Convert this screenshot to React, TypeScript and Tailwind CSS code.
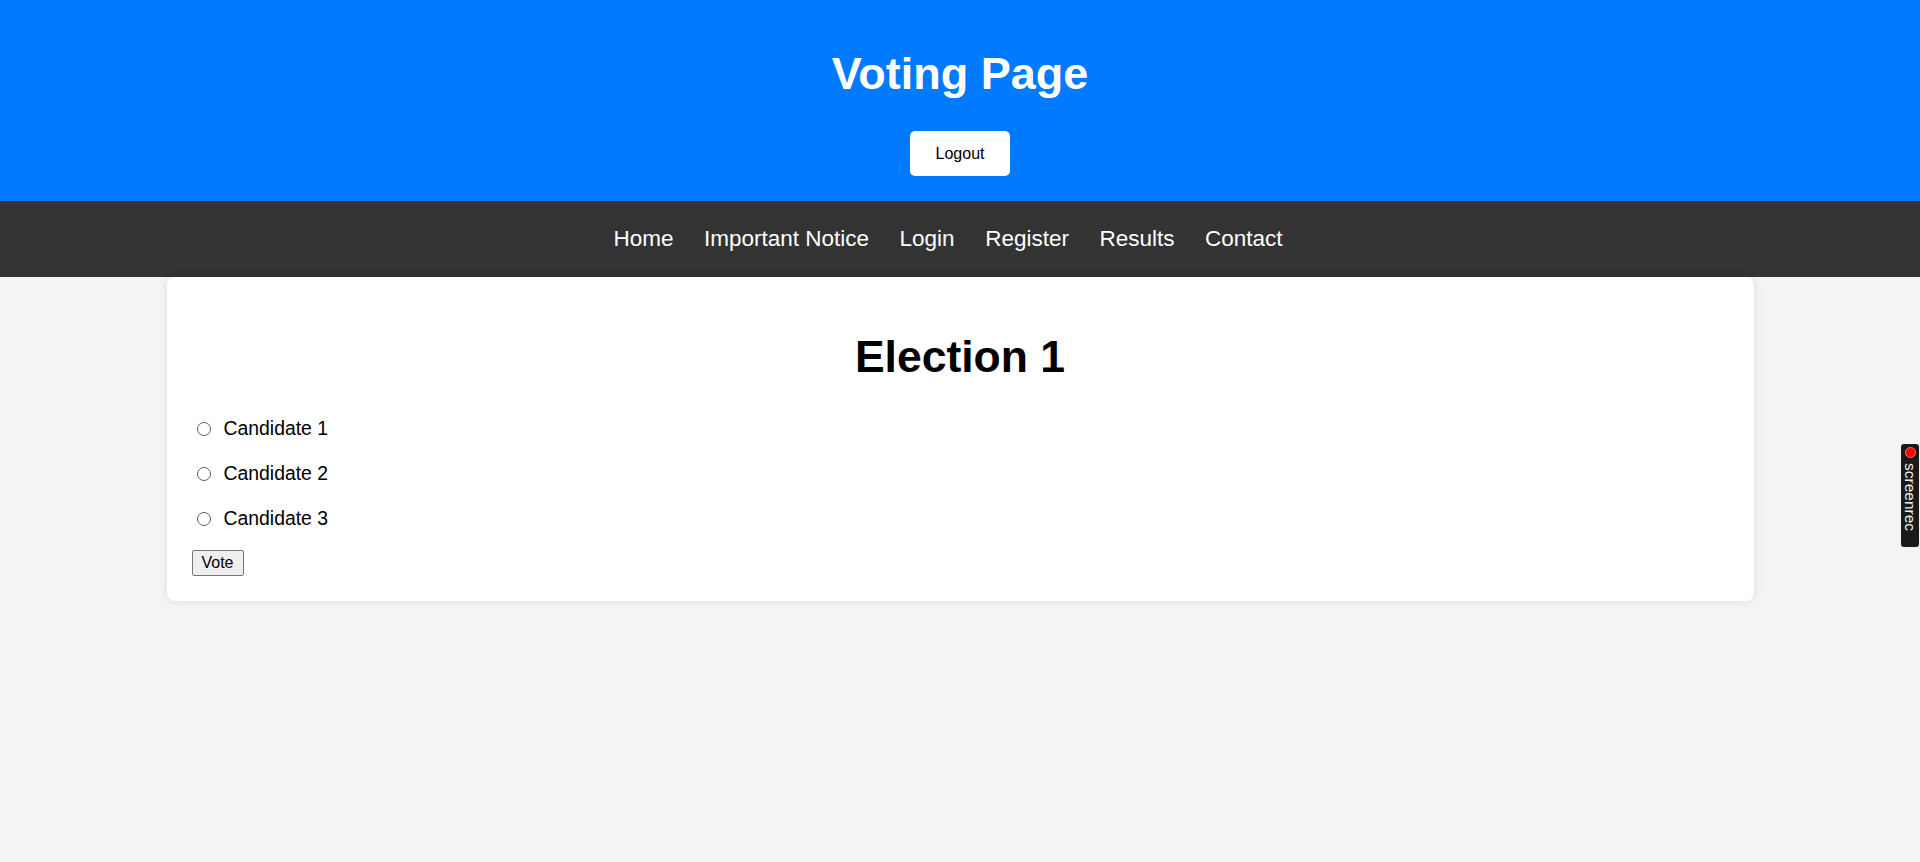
import { useState } from 'react'

const links = ['Home', 'Important Notice', 'Login', 'Register', 'Results', 'Contact']
const candidates = ['Candidate 1', 'Candidate 2', 'Candidate 3']

export default function App() {
  const [choice, setChoice] = useState<string | null>(null)

  return (
    <div className="relative min-h-screen bg-[#f4f4f4] font-['Liberation_Sans',Arial,sans-serif] text-black">
      {/* Cabecera */}
      <header className="flex h-[201px] flex-col items-center bg-[#007bff] pt-[48px] text-white">
        <h1 className="text-[45px] font-bold leading-[51px]">Voting Page</h1>
        <button className="mt-[32px] h-[45px] w-[100px] rounded-[5px] bg-white text-[16px] text-black">
          Logout
        </button>
      </header>

      {/* Navegación */}
      <nav className="flex h-[76px] items-center justify-center gap-[30.5px] bg-[#333333] pr-[24px] text-[22.5px] text-white">
        {links.map((l) => (
          <a key={l} href="#" className="leading-[26px]">
            {l}
          </a>
        ))}
      </nav>

      {/* Tarjeta de elección */}
      <main className="mx-auto w-[1587px] rounded-[8px] bg-white p-[25px] shadow-[0_0_10px_rgba(0,0,0,0.1)]">
        <h2 className="mt-[30px] text-center text-[44.5px] font-bold leading-[49px]">Election 1</h2>
        <div className="mt-[25px]">
          {candidates.map((c) => (
            <label key={c} className="flex h-[45px] items-center text-[19.4px]">
              <input
                type="radio"
                name="candidate"
                checked={choice === c}
                onChange={() => setChoice(c)}
                className="m-0 ml-[5px] mr-[13px] h-[14px] w-[14px] appearance-none rounded-full border border-[#5f5f5f] bg-white checked:border-[4px] checked:border-[#0075ff]"
              />
              {c}
            </label>
          ))}
        </div>
        <button className="mt-[9px] h-[26px] w-[52px] rounded-[2px] border border-[#767676] bg-[#efefef] text-[16px] leading-none">
          Vote
        </button>
      </main>

      {/* Widget screenrec */}
      <div className="absolute right-[1px] top-[444px] flex h-[103px] w-[18px] flex-col items-center rounded-[3px] bg-[#1a1a1a] pt-[3px]">
        <span className="h-[11px] w-[11px] rounded-full border border-[#ff7070] bg-[#ff0000]" />
        <span className="mt-[5px] text-[15.5px] leading-[18px] text-[#f0f0f0] [writing-mode:vertical-rl]">
          screenrec
        </span>
      </div>
    </div>
  )
}
